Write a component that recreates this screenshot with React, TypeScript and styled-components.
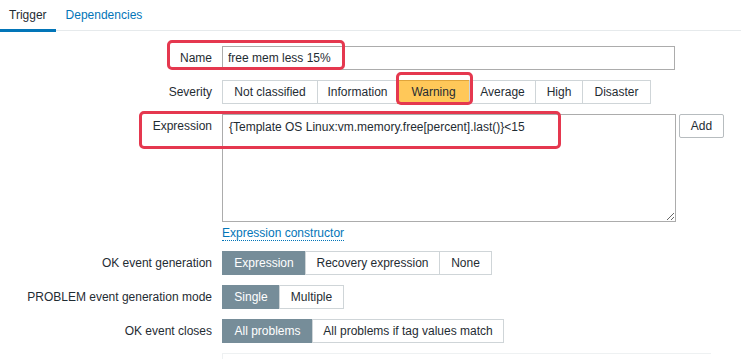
import React from 'react'
import styled, { createGlobalStyle } from 'styled-components'

const Global = createGlobalStyle`
  html, body {
    margin: 0;
    padding: 0;
    background: #fff;
  }
  body {
    font-family: 'Liberation Sans', Arial, sans-serif;
    font-size: 12px;
    color: #1f2c33;
  }
`

const Page = styled.div`
  position: relative;
  width: 741px;
  height: 359px;
  overflow: hidden;
`

const TabBar = styled.div`
  display: flex;
  height: 30px;
  border-bottom: 1px solid #e6eaec;
`

const Tab = styled.div<{ $active?: boolean }>`
  padding: 0 9px;
  line-height: 28px;
  height: 28px;
  margin-top: 1px;
  color: ${(p) => (p.$active ? '#1f2c33' : '#0275b8')};
  border-bottom: 3px solid ${(p) => (p.$active ? '#0275b8' : 'transparent')};
  margin-left: ${(p) => (p.$active ? '0' : '1px')};
`

const Form = styled.div`
  display: grid;
  grid-template-columns: 212px 1fr;
  column-gap: 10px;
  row-gap: 10px;
  padding-top: 15px;
  align-items: start;
`

const Label = styled.div`
  text-align: right;
  line-height: 24px;
  white-space: nowrap;
`

const TextInput = styled.input`
  box-sizing: border-box;
  width: 453px;
  height: 24px;
  margin: 0;
  padding: 0 5px;
  border: 1px solid #acacac;
  font: inherit;
  color: #1f2c33;
  outline: none;
`

const ButtonGroup = styled.div`
  display: flex;
  height: 24px;
`

const Choice = styled.div<{ $w: number; $on?: boolean; $warn?: boolean }>`
  box-sizing: border-box;
  width: ${(p) => p.$w}px;
  height: 24px;
  line-height: 22px;
  text-align: center;
  white-space: nowrap;
  border: 1px solid ${(p) => (p.$on ? '#768d99' : p.$warn ? '#e0a43a' : '#cfd5d8')};
  background: ${(p) => (p.$on ? '#768d99' : p.$warn ? '#ffc859' : '#fff')};
  color: ${(p) => (p.$on ? '#fff' : '#1f2c33')};
  & + & {
    margin-left: -1px;
  }
`

const ExprWrap = styled.div`
  display: flex;
  flex-direction: column;
  align-items: flex-start;
`

const ExprRow = styled.div`
  display: flex;
  align-items: flex-start;
  gap: 3px;
`

const TextArea = styled.textarea`
  box-sizing: border-box;
  width: 454px;
  height: 108px;
  margin: 0;
  padding: 5px 6px;
  border: 1px solid #acacac;
  font: inherit;
  line-height: 14px;
  color: #1f2c33;
  outline: none;
`

const AddButton = styled.div`
  box-sizing: border-box;
  width: 45px;
  height: 24px;
  line-height: 22px;
  text-align: center;
  border: 1px solid #b7bcbf;
  border-radius: 2px;
  background: #fff;
  color: #1f2c33;
`

const Link = styled.span`
  margin-top: 4px;
  line-height: 14px;
  color: #0275b8;
  border-bottom: 1px dotted #0275b8;
`

const NextField = styled.div`
  width: 488px;
  height: 40px;
  border: 1px solid #eef1f2;
  border-right: none;
`

const Mark = styled.div<{ $x: number; $y: number; $w: number; $h: number }>`
  position: absolute;
  left: ${(p) => p.$x}px;
  top: ${(p) => p.$y}px;
  width: ${(p) => p.$w}px;
  height: ${(p) => p.$h}px;
  box-sizing: border-box;
  border: 3px solid #e5384f;
  border-radius: 5px;
  pointer-events: none;
`

export default function App() {
  return (
    <Page>
      <Global />
      <TabBar>
        <Tab $active>Trigger</Tab>
        <Tab>Dependencies</Tab>
      </TabBar>
      <Form>
        <Label>Name</Label>
        <TextInput defaultValue="free mem less 15%" />

        <Label>Severity</Label>
        <ButtonGroup>
          <Choice $w={96}>Not classified</Choice>
          <Choice $w={81}>Information</Choice>
          <Choice $w={73} $warn>Warning</Choice>
          <Choice $w={67}>Average</Choice>
          <Choice $w={48}>High</Choice>
          <Choice $w={69}>Disaster</Choice>
        </ButtonGroup>

        <Label>Expression</Label>
        <ExprWrap>
          <ExprRow>
            <TextArea defaultValue="{Template OS Linux:vm.memory.free[percent].last()}<15" />
            <AddButton>Add</AddButton>
          </ExprRow>
          <Link>Expression constructor</Link>
        </ExprWrap>

        <Label>OK event generation</Label>
        <ButtonGroup>
          <Choice $w={84} $on>Expression</Choice>
          <Choice $w={135}>Recovery expression</Choice>
          <Choice $w={53}>None</Choice>
        </ButtonGroup>

        <Label>PROBLEM event generation mode</Label>
        <ButtonGroup>
          <Choice $w={58} $on>Single</Choice>
          <Choice $w={65}>Multiple</Choice>
        </ButtonGroup>

        <Label>OK event closes</Label>
        <ButtonGroup>
          <Choice $w={91} $on>All problems</Choice>
          <Choice $w={192}>All problems if tag values match</Choice>
        </ButtonGroup>

        <Label />
        <NextField />
      </Form>

      <Mark $x={167} $y={40} $w={178} $h={30} />
      <Mark $x={396} $y={72} $w={77} $h={33} />
      <Mark $x={139} $y={111} $w={422} $h={38} />
    </Page>
  )
}
